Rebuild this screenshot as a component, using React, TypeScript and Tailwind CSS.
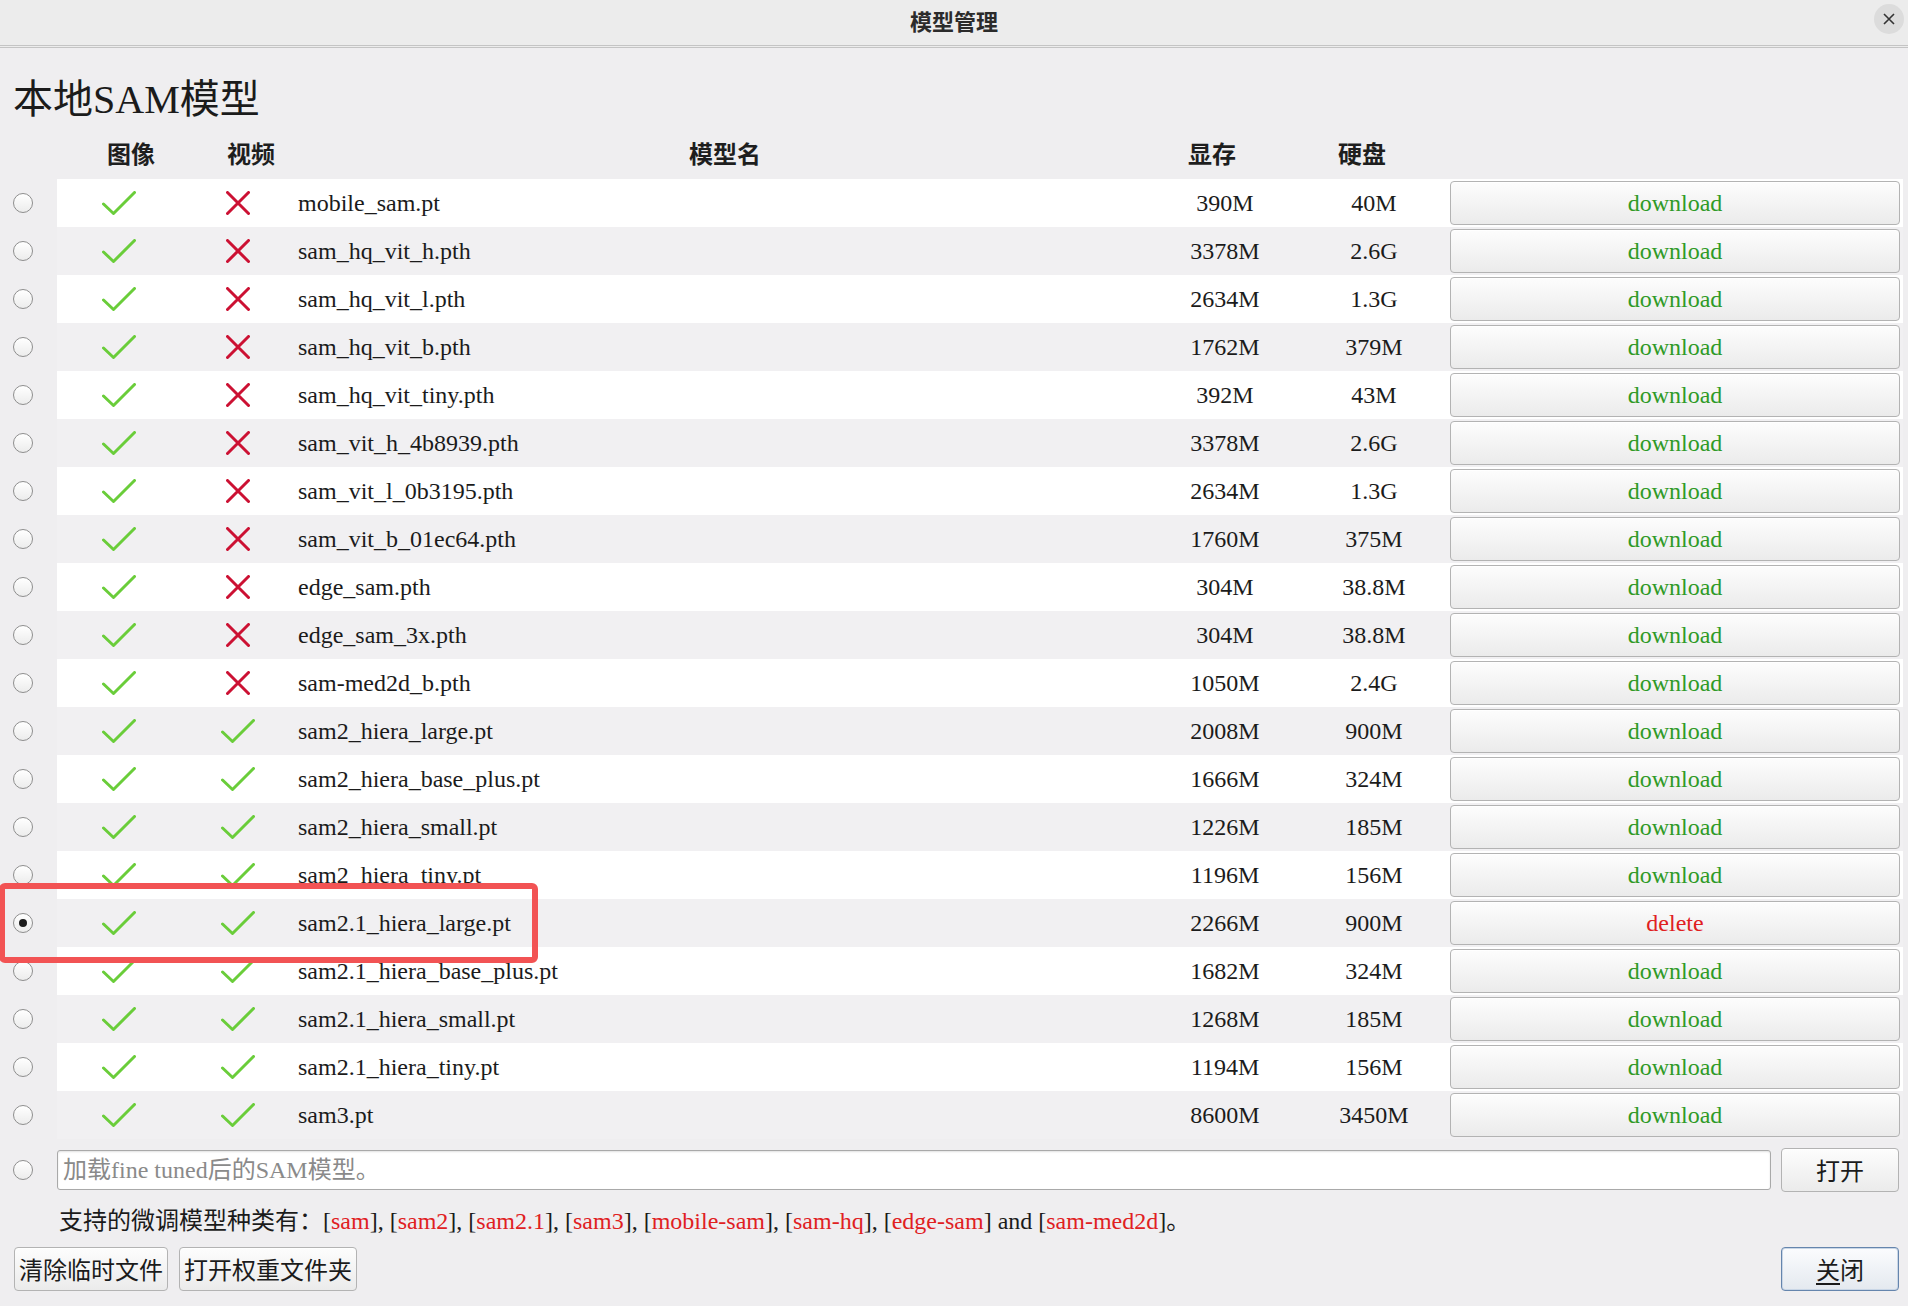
import React from 'react';

type Model = {
    name: string;
    video: boolean;
    vram: string;
    disk: string;
    installed?: boolean;
};

const models: Model[] = [
    { name: 'mobile_sam.pt', video: false, vram: '390M', disk: '40M' },
    { name: 'sam_hq_vit_h.pth', video: false, vram: '3378M', disk: '2.6G' },
    { name: 'sam_hq_vit_l.pth', video: false, vram: '2634M', disk: '1.3G' },
    { name: 'sam_hq_vit_b.pth', video: false, vram: '1762M', disk: '379M' },
    { name: 'sam_hq_vit_tiny.pth', video: false, vram: '392M', disk: '43M' },
    { name: 'sam_vit_h_4b8939.pth', video: false, vram: '3378M', disk: '2.6G' },
    { name: 'sam_vit_l_0b3195.pth', video: false, vram: '2634M', disk: '1.3G' },
    { name: 'sam_vit_b_01ec64.pth', video: false, vram: '1760M', disk: '375M' },
    { name: 'edge_sam.pth', video: false, vram: '304M', disk: '38.8M' },
    { name: 'edge_sam_3x.pth', video: false, vram: '304M', disk: '38.8M' },
    { name: 'sam-med2d_b.pth', video: false, vram: '1050M', disk: '2.4G' },
    { name: 'sam2_hiera_large.pt', video: true, vram: '2008M', disk: '900M' },
    { name: 'sam2_hiera_base_plus.pt', video: true, vram: '1666M', disk: '324M' },
    { name: 'sam2_hiera_small.pt', video: true, vram: '1226M', disk: '185M' },
    { name: 'sam2_hiera_tiny.pt', video: true, vram: '1196M', disk: '156M' },
    { name: 'sam2.1_hiera_large.pt', video: true, vram: '2266M', disk: '900M', installed: true },
    { name: 'sam2.1_hiera_base_plus.pt', video: true, vram: '1682M', disk: '324M' },
    { name: 'sam2.1_hiera_small.pt', video: true, vram: '1268M', disk: '185M' },
    { name: 'sam2.1_hiera_tiny.pt', video: true, vram: '1194M', disk: '156M' },
    { name: 'sam3.pt', video: true, vram: '8600M', disk: '3450M' },
];

const supported = ['sam', 'sam2', 'sam2.1', 'sam3', 'mobile-sam', 'sam-hq', 'edge-sam'];

const Check = () => (
    <svg width="34" height="24" viewBox="0 0 34 24" fill="none">
        <path d="M1.5 13 L11.5 22.5 L32.5 1.5" stroke="#6acd3a" strokeWidth="3" strokeLinecap="round" strokeLinejoin="round" />
    </svg>
);

const Cross = () => (
    <svg width="24" height="24" viewBox="0 0 24 24" fill="none">
        <path d="M1.5 1.5 L22.5 22.5 M22.5 1.5 L1.5 22.5" stroke="#cc1133" strokeWidth="3" strokeLinecap="round" />
    </svg>
);

const Radio = ({ checked = false }: { checked?: boolean }) => (
    <div className="w-[20px] h-[20px] rounded-full border border-[#8e8e8e] bg-gradient-to-b from-white to-[#ececec] flex items-center justify-center">
        {checked && <div className="w-[8px] h-[8px] rounded-full bg-[#1c1c1c]"></div>}
    </div>
);

const btn = 'border border-[#b3b3b3] rounded-[4px] bg-gradient-to-b from-[#fdfdfd] to-[#ebebeb] shadow-[inset_0_1px_0_#ffffff] flex items-center justify-center';

export default function App() {
    return (
        <div className="relative w-[1908px] h-[1306px] bg-[#efeef0] flex flex-col font-['Liberation_Serif','Noto_Sans_CJK_SC',serif] text-[#1b1b1b] overflow-hidden">
            {/* title bar */}
            <div className="relative h-[48px] shrink-0 bg-[#ececec] border-b-[3px] border-double border-[#c4c4c4] flex items-center justify-center pb-[5px]">
                <span className="text-[22px] font-bold text-[#2b2b2b] font-['Noto_Sans_CJK_SC',sans-serif]">模型管理</span>
                <div className="absolute right-[4px] top-[4px] w-[30px] h-[30px] rounded-full bg-[#dcdcdc] flex items-center justify-center">
                    <svg width="12" height="12" viewBox="0 0 12 12">
                        <path d="M1 1 L11 11 M11 1 L1 11" stroke="#333" strokeWidth="1.6" />
                    </svg>
                </div>
            </div>

            <div className="h-[82px] shrink-0 pl-[13px] pt-[28px]">
                <h1 className="text-[40px] leading-[48px] font-normal">本地SAM模型</h1>
            </div>

            {/* header */}
            <div className="h-[49px] shrink-0 pl-[57px] pb-[3px] grid grid-cols-[124px_114px_860px_140px_150px_1fr] items-center text-[24px] font-bold font-['Noto_Sans_CJK_SC',sans-serif] text-[#1e1e1e]">
                <div className="text-center pl-[24px]">图像</div>
                <div className="text-center pl-[26px]">视频</div>
                <div className="text-center">模型名</div>
                <div className="text-center pr-[26px]">显存</div>
                <div className="text-center pr-[16px]">硬盘</div>
                <div></div>
            </div>

            {/* rows */}
            <div className="flex flex-col shrink-0">
                {models.map((m, i) => (
                    <div key={m.name} className="h-[48px] flex items-center">
                        <div className="w-[57px] shrink-0 pl-[13px]">
                            <Radio checked={m.installed} />
                        </div>
                        <div className={`h-full mr-[5px] flex-1 grid grid-cols-[124px_114px_860px_140px_150px_1fr] items-center text-[24px] ${i % 2 === 0 ? 'bg-white' : 'bg-[#f1f0f2]'}`}>
                            <div className="flex justify-center"><Check /></div>
                            <div className="flex justify-center">{m.video ? <Check /> : <Cross />}</div>
                            <div className="pl-[3px]">{m.name}</div>
                            <div className="text-center">{m.vram}</div>
                            <div className="text-center pl-[8px]">{m.disk}</div>
                            <div className="pl-[5px] pr-[3px] h-full py-[2px]">
                                <div className={`${btn} h-full text-[24px] ${m.installed ? 'text-[#e0201f]' : 'text-[#2f9a27]'}`}>
                                    {m.installed ? 'delete' : 'download'}
                                </div>
                            </div>
                        </div>
                    </div>
                ))}
            </div>

            {/* fine tuned */}
            <div className="mt-[9px] h-[44px] shrink-0 flex items-center">
                <div className="w-[57px] shrink-0 pl-[13px]">
                    <Radio />
                </div>
                <div className="w-[1714px] h-[40px] bg-white border border-[#a9a9a9] rounded-[3px] shadow-[inset_0_1px_2px_rgba(0,0,0,0.12)] flex items-center pl-[5px] text-[24px] text-[#8a8a8a]">
                    加载fine tuned后的SAM模型。
                </div>
                <div className={`${btn} ml-[10px] w-[118px] h-[44px] text-[24px] font-['Noto_Sans_CJK_SC',sans-serif]`}>打开</div>
            </div>

            <div className="mt-[13px] pl-[59px] h-[28px] shrink-0 text-[24px] leading-[28px] whitespace-nowrap">
                <span className="font-['Noto_Sans_CJK_SC',sans-serif]">支持的微调模型种类有：</span>
                {supported.map((s, i) => (
                    <span key={s}>
                        [<span className="text-[#e0201f]">{s}</span>]{i < supported.length - 1 ? ', ' : ''}
                    </span>
                ))}
                <span> and [<span className="text-[#e0201f]">sam-med2d</span>]。</span>
            </div>

            {/* bottom buttons */}
            <div className="mt-[14px] h-[44px] shrink-0 pl-[14px] pr-[9px] flex items-center justify-between text-[24px] font-['Noto_Sans_CJK_SC',sans-serif]">
                <div className="flex gap-[11px] h-full">
                    <div className={`${btn} w-[154px] h-full`}>清除临时文件</div>
                    <div className={`${btn} w-[178px] h-full`}>打开权重文件夹</div>
                </div>
                <div className="w-[118px] h-full border border-[#6585ad] rounded-[4px] bg-gradient-to-b from-[#fbfcfe] to-[#e4e9ef] shadow-[inset_0_0_0_1px_#c9d6e6] flex items-center justify-center">
                    <span><span className="underline underline-offset-4">关</span>闭</span>
                </div>
            </div>

            {/* annotation highlight */}
            <div className="absolute left-[-1px] top-[883px] w-[539px] h-[80px] border-[6px] border-[#f25354] rounded-[6px] pointer-events-none"></div>
        </div>
    );
}
